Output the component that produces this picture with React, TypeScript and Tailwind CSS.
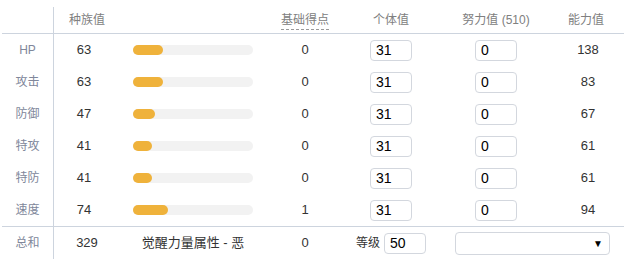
import React from 'react'

interface StatRow {
  label: string
  base: number
  point: number
  iv: number
  ev: number
  total: number
}

const rows: StatRow[] = [
  { label: 'HP', base: 63, point: 0, iv: 31, ev: 0, total: 138 },
  { label: '攻击', base: 63, point: 0, iv: 31, ev: 0, total: 83 },
  { label: '防御', base: 47, point: 0, iv: 31, ev: 0, total: 67 },
  { label: '特攻', base: 41, point: 0, iv: 31, ev: 0, total: 61 },
  { label: '特防', base: 41, point: 0, iv: 31, ev: 0, total: 61 },
  { label: '速度', base: 74, point: 1, iv: 31, ev: 0, total: 94 },
]

const cols = 'grid grid-cols-[52px_60px_158px_66px_106px_104px_76px]'

function NumBox({ value }: { value: number }) {
  return (
    <input
      type="text"
      defaultValue={value}
      className="w-[42px] h-[21px] rounded-[4px] border border-[#d3d7de] bg-white pl-[5px] text-[14px] text-black outline-none"
    />
  )
}

export default function App() {
  return (
    <div
      className="w-[641px] h-[260px] bg-white pl-[2px] pt-[7px] text-[13px] text-[#333]"
      style={{ fontFamily: '"Liberation Sans", "Noto Sans CJK SC", sans-serif' }}
    >
      <div className="w-[622px]">
        {/* Header */}
        <div className={`${cols} h-[27px] border-b border-[#cdd4de] text-[12px] leading-[17px] text-[#808080]`}>
          <div className="border-r border-[#cdd4de]" />
          <div className="pl-[15px] pt-[5px] whitespace-nowrap">种族值</div>
          <div />
          <div className="flex justify-center pt-[5px]">
            <span className="border-b border-dashed border-[#999] h-[18px]">基础得点</span>
          </div>
          <div className="text-center pt-[5px]">个体值</div>
          <div className="text-center pt-[5px]">努力值 (510)</div>
          <div className="text-center pt-[5px]">能力值</div>
        </div>

        {/* Rows */}
        {rows.map(r => (
          <div key={r.label} className={`${cols} h-[32px] items-center`}>
            <div className="h-full flex items-center justify-center border-r border-[#cdd4de] text-[12px] text-[#80879a]">
              {r.label}
            </div>
            <div className="text-center">{r.base}</div>
            <div className="pl-[19px]">
              <div className="w-[120px] h-[10px] rounded-full bg-[#f2f2f2]">
                <div
                  className="h-full rounded-full bg-[#efb23b]"
                  style={{ width: `${Math.round((r.base / 255) * 120)}px` }}
                />
              </div>
            </div>
            <div className="text-center">{r.point}</div>
            <div className="flex justify-center">
              <NumBox value={r.iv} />
            </div>
            <div className="flex justify-center">
              <NumBox value={r.ev} />
            </div>
            <div className="text-center pl-[4px]">{r.total}</div>
          </div>
        ))}

        {/* Footer */}
        <div className={`${cols} h-[33px] items-center border-t border-[#cdd4de]`}>
          <div className="h-full flex items-center justify-center border-r border-[#cdd4de] text-[12px] text-[#80879a]">
            总和
          </div>
          <div className="text-center pl-[6px]">329</div>
          <div className="text-center text-[13px]">觉醒力量属性 - 恶</div>
          <div className="text-center">0</div>
          <div className="flex items-center justify-center gap-[4px]">
            <span className="text-[12px]">等级</span>
            <NumBox value={50} />
          </div>
          <div className="col-span-2 pl-[11px]">
            <div className="w-[155px] h-[23px] rounded-[4px] border border-[#d3d7de] flex items-center justify-end pr-[6px]">
              <span className="text-[10px] text-black">▼</span>
            </div>
          </div>
        </div>
      </div>
    </div>
  )
}
